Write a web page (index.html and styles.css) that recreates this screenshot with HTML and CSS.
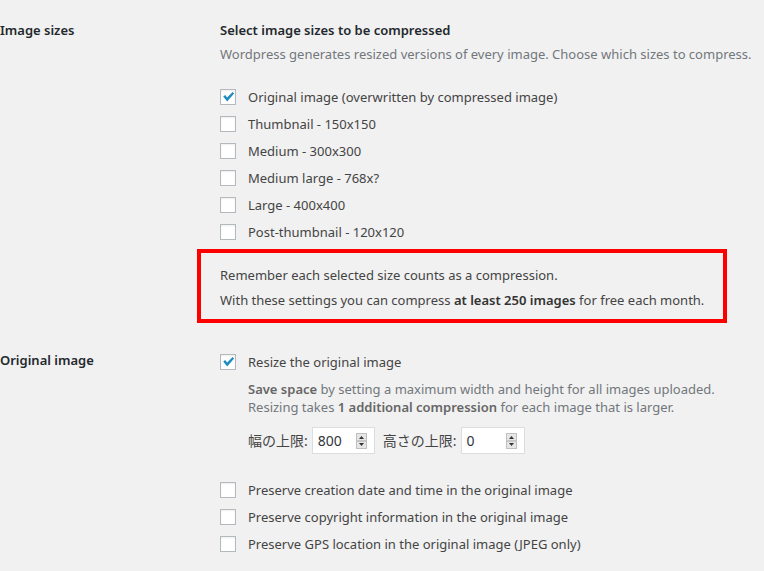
FILE: index.html
```html
<!DOCTYPE html>
<html lang="en">
<head>
<meta charset="utf-8">
<title>Image sizes settings</title>
<link rel="stylesheet" href="styles.css">
</head>
<body>
<div class="form-table">
  <div class="row row-sizes">
    <div class="th">Image sizes</div>
    <div class="td">
      <h4 class="title">Select image sizes to be compressed</h4>
      <p class="desc">Wordpress generates resized versions of every image. Choose which sizes to compress.</p>
      <ul class="checks sizes">
        <li><span class="cb checked"><svg viewBox="0 0 16 16" width="16" height="16"><path d="M3.2 7.6 L5.2 5.9 L7.1 8.6 L12.6 2.9 L14.1 4.6 L7.2 12.4 Z" fill="#1e8cbe"/></svg></span>Original image (overwritten by compressed image)</li>
        <li><span class="cb"></span>Thumbnail - 150x150</li>
        <li><span class="cb"></span>Medium - 300x300</li>
        <li><span class="cb"></span>Medium large - 768x?</li>
        <li><span class="cb"></span>Large - 400x400</li>
        <li><span class="cb"></span>Post-thumbnail - 120x120</li>
      </ul>
      <div class="notice">
        <p>Remember each selected size counts as a compression.</p>
        <p>With these settings you can compress <strong>at least 250 images</strong> for free each month.</p>
      </div>
    </div>
  </div>
  <div class="row row-original">
    <div class="th">Original image</div>
    <div class="td">
      <ul class="checks">
        <li><span class="cb checked"><svg viewBox="0 0 16 16" width="16" height="16"><path d="M3.2 7.6 L5.2 5.9 L7.1 8.6 L12.6 2.9 L14.1 4.6 L7.2 12.4 Z" fill="#1e8cbe"/></svg></span>Resize the original image</li>
      </ul>
      <div class="resize">
        <p class="desc small"><strong>Save space</strong> by setting a maximum width and height for all images uploaded.<br>Resizing takes <strong>1 additional compression</strong> for each image that is larger.</p>
        <div class="dims">
          <label class="jp">幅の上限:</label>
          <span class="num w1"><span class="val">800</span><svg class="spin" viewBox="0 0 11 16" width="11" height="16"><rect x="0.5" y="0.5" width="10" height="15" fill="#e6e6e6" stroke="#c0c0c0"/><line x1="1" y1="8" x2="10" y2="8" stroke="#a8a8a8"/><path d="M3 6 L5.5 3 L8 6 Z" fill="#333"/><path d="M3 10 L5.5 13 L8 10 Z" fill="#333"/></svg></span>
          <label class="jp second">高さの上限:</label>
          <span class="num w2"><span class="val">0</span><svg class="spin" viewBox="0 0 11 16" width="11" height="16"><rect x="0.5" y="0.5" width="10" height="15" fill="#e6e6e6" stroke="#c0c0c0"/><line x1="1" y1="8" x2="10" y2="8" stroke="#a8a8a8"/><path d="M3 6 L5.5 3 L8 6 Z" fill="#333"/><path d="M3 10 L5.5 13 L8 10 Z" fill="#333"/></svg></span>
        </div>
      </div>
      <ul class="checks preserve">
        <li><span class="cb"></span>Preserve creation date and time in the original image</li>
        <li><span class="cb"></span>Preserve copyright information in the original image</li>
        <li><span class="cb"></span>Preserve GPS location in the original image (JPEG only)</li>
      </ul>
    </div>
  </div>
</div>
</body>
</html>
```

FILE: styles.css
```css
html, body {
  margin: 0;
  padding: 0;
  background: #f1f1f1;
}
body {
  font-family: "Noto Sans", "Noto Sans CJK JP", sans-serif;
  font-size: 13px;
  color: #444;
  line-height: 20px;
}
.form-table {
  display: flex;
  flex-direction: column;
}
.row {
  display: grid;
  grid-template-columns: 220px 1fr;
}
.th {
  color: #23282d;
  font-weight: 600;
  line-height: 20px;
}
.row-sizes .th, .row-sizes .td { padding-top: 20px; }
.row-original .th { padding-top: 27px; }
.row-original .td { padding-top: 25px; }
.title {
  margin: 0;
  font-size: 13px;
  font-weight: 600;
  color: #23282d;
  line-height: 20px;
}
.desc {
  margin: 4px 0 0;
  color: #72777c;
  line-height: 20px;
}
.desc strong { color: #666; font-weight: 600; }
.checks {
  list-style: none;
  margin: 0;
  padding: 0;
}
.sizes { margin-top: 19px; }
.checks li {
  height: 27px;
  display: flex;
  align-items: center;
}
.cb {
  width: 16px;
  height: 16px;
  box-sizing: border-box;
  border: 1px solid #b4b9be;
  background: #fff;
  box-shadow: inset 0 1px 2px rgba(0,0,0,.07);
  margin-right: 12px;
  flex: none;
  position: relative;
}
.cb svg {
  position: absolute;
  left: -1px;
  top: -1px;
}
.notice {
  margin: 4px 0 0 -23px;
  width: 530px;
  box-sizing: border-box;
  border: 4px solid #ff0000;
  padding: 10px 12px 7px 19px;
}
.notice p {
  margin: 0;
  line-height: 24px;
  white-space: nowrap;
}
.notice p + p { margin-top: 1px; }
.notice strong { font-weight: 600; color: #333; }
.resize {
  margin-left: 28px;
}
.desc.small {
  margin-top: 5px;
  line-height: 18px;
}
.dims {
  margin-top: 11px;
  display: flex;
  align-items: center;
  height: 27px;
}
.jp { color: #444; font-size: 14px; }
.num {
  margin-left: 4px;
  height: 27px;
  box-sizing: border-box;
  border: 1px solid #ddd;
  background: #fff;
  display: flex;
  align-items: center;
  justify-content: space-between;
  padding: 0 7px 0 5px;
  color: #32373c;
  font-size: 14px;
}
.w1 { width: 63px; }
.w2 { width: 64px; }
.second { margin-left: 8px; }
.preserve { margin-top: 22px; }
```
